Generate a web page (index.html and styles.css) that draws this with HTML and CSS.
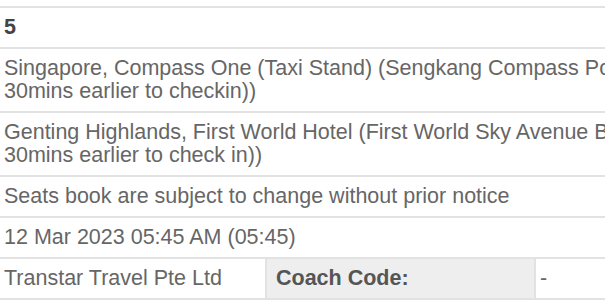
FILE: index.html
```html
<!DOCTYPE html>
<html>
	<head>
		<meta charset="utf-8">
		<title>Trip Details</title>
		<link rel="stylesheet" href="styles.css">
	</head>
	<body>
	<div class="wrap">
		<table class="trip">
			<colgroup>
				<col class="c1"/>
				<col class="c2"/>
				<col class="c3"/>
			</colgroup>
			<tbody>
				<tr>
					<td colspan="3" class="num">5</td>
				</tr>
				<tr>
					<td colspan="3">Singapore, Compass One (Taxi Stand) (Sengkang Compass Point (Please be there<br>30mins earlier to checkin))</td>
				</tr>
				<tr>
					<td colspan="3">Genting Highlands, First World Hotel (First World Sky Avenue Bus Terminal (Please be there<br>30mins earlier to check in))</td>
				</tr>
				<tr>
					<td colspan="3">Seats book are subject to change without prior notice</td>
				</tr>
				<tr>
					<td colspan="3">12 Mar 2023 05:45 AM (05:45)</td>
				</tr>
				<tr>
					<td>Transtar Travel Pte Ltd</td>
					<th>Coach Code:</th>
					<td>-</td>
				</tr>
			</tbody>
		</table>
	</div>
	</body>
</html>
```

FILE: styles.css
```css
html,body{
	margin: 0;
	padding: 0;
	background: #fff;
	overflow: hidden;
}
.wrap{
	padding-top: 6px;
	width: 605px;
	overflow: hidden;
}
.trip{
	width: 980px;
	table-layout: fixed;
	border-collapse: collapse;
	font-family: "Liberation Sans", Arial, sans-serif;
	font-size: 21.5px;
	line-height: 23px;
	color: #666;
}
.c1{
	width: 266px;
}
.c2{
	width: 269px;
}
.trip td,.trip th{
	border-top: 2px solid #e2e2e2;
	border-bottom: 2px solid #e2e2e2;
	padding: 8px 4px;
	text-align: left;
	vertical-align: top;
	white-space: nowrap;
}
.trip th{
	background-color: #eee;
	color: #555;
	font-weight: bold;
	padding-left: 9px;
	border-left: 2px solid #e2e2e2;
	border-right: 2px solid #e2e2e2;
}
.trip .num{
	font-weight: bold;
	color: #444;
}
```
